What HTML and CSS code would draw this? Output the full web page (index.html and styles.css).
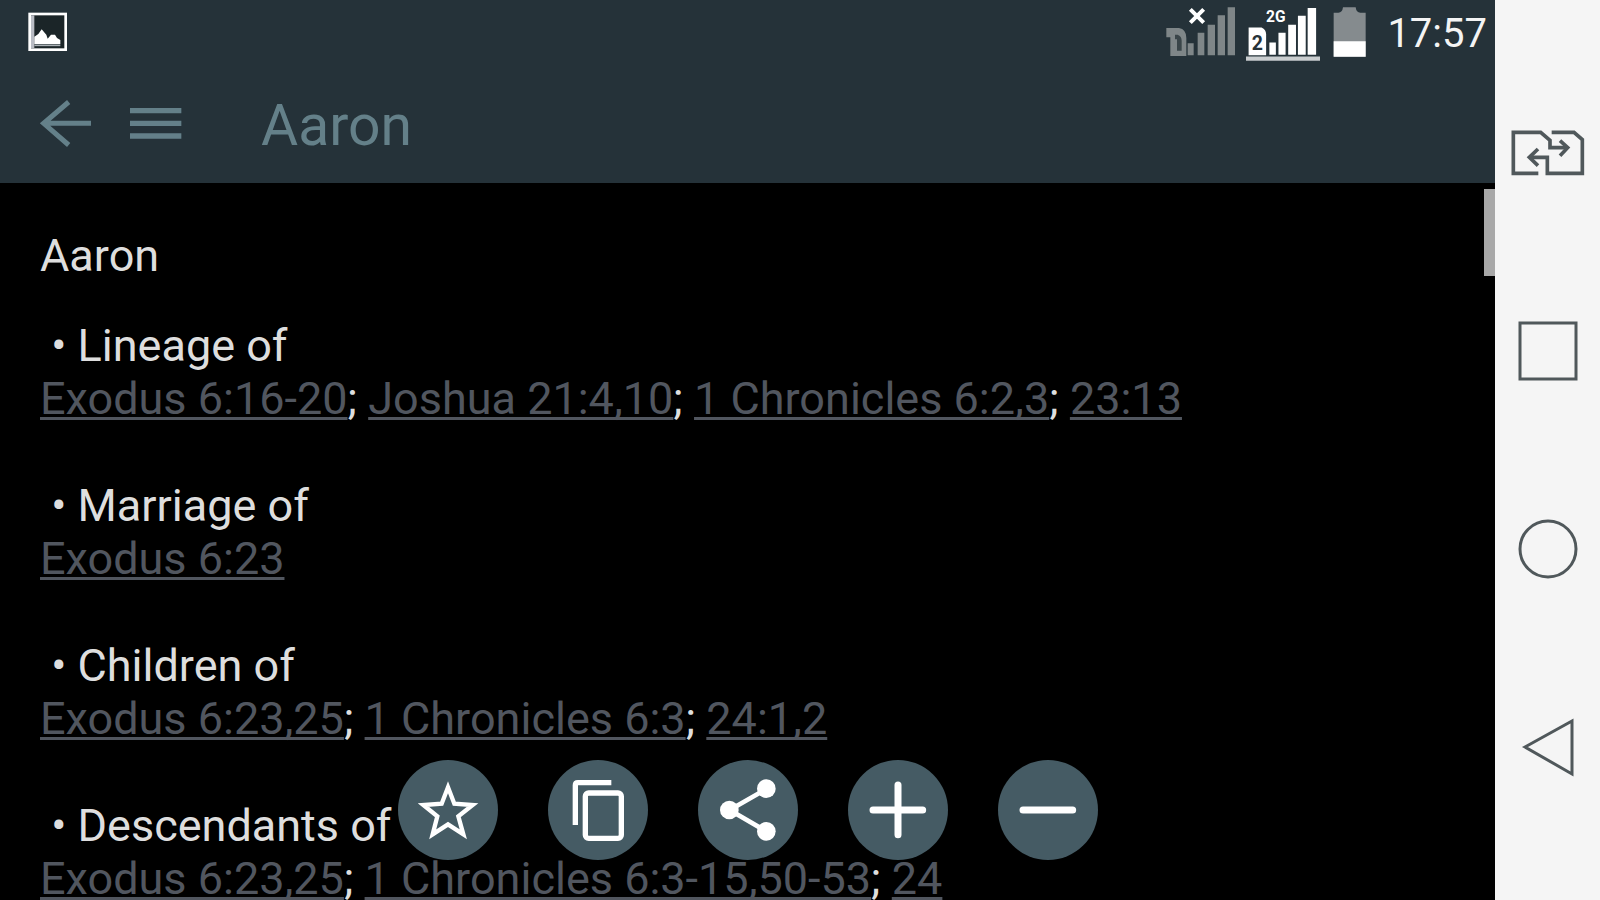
FILE: index.html
```html
<!DOCTYPE html>
<html lang="en">
<head>
<meta charset="utf-8">
<title>Aaron</title>
<link rel="stylesheet" href="styles.css">
</head>
<body>
<div class="device">
  <div class="app">
    <header class="header">
      <div class="status">
        <svg class="status-photo" viewBox="84 0 120 192" aria-hidden="true">
          <rect x="89" y="42" width="108" height="107" fill="#1b2528" stroke="#fff" stroke-width="8"/>
          <path d="M98 46v98" stroke="#b9bcc4" stroke-width="10"/>
          <path d="M103 132v-22l12-8 10-14 14 16 4 12 10-12h12l6 10 10 6v12z" fill="#fff"/>
          <path d="M103 136h78" stroke="#a9b0b4" stroke-width="5"/>
        </svg>
        <div class="status-right">
          <svg class="status-sim" viewBox="46 0 216 192" aria-hidden="true">
            <path d="M122 28l40 40M162 28l-40 40" stroke="#fff" stroke-width="12"/>
            <path d="M50 84h38q22 4 22 30v54H62v-56H50z" fill="#7f8688"/>
            <path d="M76 104h8q12 4 12 18v30H82v-34h-6z" fill="#3a4549"/>
            <path d="M114 130h18v36h-18zM144 98h20v68h-20zM174 74h22v92h-22zM204 46h22v120h-22zM234 22h22v144h-22z" fill="#7f8688"/>
          </svg>
          <svg class="status-sim" viewBox="284 0 228 192" aria-hidden="true">
            <text class="network" x="346" y="66">2G</text>
            <path d="M292 82h40q14 6 14 22v64h-54z" fill="#fff"/>
            <text class="sim-number" x="302" y="150">2</text>
            <path d="M356 128h20v38h-20zM384 98h22v68h-22zM414 74h24v92h-24zM444 46h24v120h-24zM474 22h26v144h-26z" fill="#fff"/>
            <path d="M284 178h228" stroke="#c9cdcf" stroke-width="13"/>
          </svg>
          <svg class="status-battery" viewBox="536 0 132 192" aria-hidden="true">
            <path d="M553 38h14q12 0 14-16h38q2 16 14 16h16v132h-96z" fill="#858b8e"/>
            <path d="M553 124h96v46h-96z" fill="#fff"/>
          </svg>
          <time class="clock">17:57</time>
        </div>
      </div>
      <div class="appbar">
        <button class="bar-button" aria-label="Back">
          <svg viewBox="114 284 168 168" aria-hidden="true"><path d="M273 369H130M206 305l-75 64 75 65" fill="none" stroke="#648089" stroke-width="15"/></svg>
        </button>
        <button class="bar-button" aria-label="Menu">
          <svg viewBox="384 284 168 168" aria-hidden="true"><path d="M390 331h154M390 369h154M390 407h154" stroke="#648089" stroke-width="16"/></svg>
        </button>
        <h1 class="title">Aaron</h1>
      </div>
    </header>
    <main class="content">
      <h2 class="heading">Aaron</h2>
      <section class="entry">
        <h3 class="topic"> • Lineage of</h3>
        <p class="refs"><a href="#">Exodus 6:16-20</a>; <a href="#">Joshua 21:4,10</a>; <a href="#">1 Chronicles 6:2,3</a>; <a href="#">23:13</a></p>
      </section>
      <section class="entry">
        <h3 class="topic"> • Marriage of</h3>
        <p class="refs"><a href="#">Exodus 6:23</a></p>
      </section>
      <section class="entry">
        <h3 class="topic"> • Children of</h3>
        <p class="refs"><a href="#">Exodus 6:23,25</a>; <a href="#">1 Chronicles 6:3</a>; <a href="#">24:1,2</a></p>
      </section>
      <section class="entry">
        <h3 class="topic"> • Descendants of</h3>
        <p class="refs"><a href="#">Exodus 6:23,25</a>; <a href="#">1 Chronicles 6:3-15,50-53</a>; <a href="#">24</a></p>
      </section>
      <div class="scroll-thumb"></div>
    </main>
    <div class="actions">
      <button class="action" aria-label="Favorite">
        <svg viewBox="52 60 300 300" aria-hidden="true"><path d="M202 142l19 49 55 4-43 34 15 54-46-30-46 30 14-54-42-34 55-4z" fill="none" stroke="#fff" stroke-width="13"/></svg>
      </button>
      <button class="action" aria-label="Copy">
        <svg viewBox="504 60 300 300" aria-hidden="true"><g fill="none" stroke="#fff" stroke-width="16"><path d="M586 255V136q0-8 8-8h100"/><rect x="616" y="159" width="108" height="136" rx="10"/></g></svg>
      </button>
      <button class="action" aria-label="Share">
        <svg viewBox="954 60 300 300" aria-hidden="true"><path d="M1159 147l-110 63 110 64" fill="none" stroke="#fff" stroke-width="14"/><g fill="#fff"><circle cx="1159" cy="146" r="28"/><circle cx="1048" cy="210" r="28"/><circle cx="1159" cy="274" r="28"/></g></svg>
      </button>
      <button class="action" aria-label="Increase text size">
        <svg viewBox="142 60 300 300" aria-hidden="true"><path d="M217 210h149M292 135v149" stroke="#fff" stroke-width="21" stroke-linecap="round"/></svg>
      </button>
      <button class="action" aria-label="Decrease text size">
        <svg viewBox="592 60 300 300" aria-hidden="true"><path d="M667 210h149" stroke="#fff" stroke-width="21" stroke-linecap="round"/></svg>
      </button>
    </div>
  </div>
  <nav class="system-nav" aria-label="System">
    <button class="nav-button" aria-label="Switch SIM">
      <svg viewBox="202 36 240 240" aria-hidden="true"><g fill="none" stroke="#50585b" stroke-width="11"><path d="M293 220h-75V97h82l28 24v22h50"/><path d="M358 122l23 21-23 24"/><path d="M333 97h67l25 22v101H320v-48h-50"/><path d="M292 147l-26 25 26 25"/></g></svg>
    </button>
    <button class="nav-button" aria-label="Recent apps">
      <svg viewBox="0 0 80 80" aria-hidden="true"><rect x="12" y="12" width="56" height="56" fill="none" stroke="#50585b" stroke-width="3"/></svg>
    </button>
    <button class="nav-button" aria-label="Home">
      <svg viewBox="0 0 80 80" aria-hidden="true"><circle cx="40" cy="40" r="28" fill="none" stroke="#50585b" stroke-width="3"/></svg>
    </button>
    <button class="nav-button" aria-label="Go back">
      <svg viewBox="0 0 80 80" aria-hidden="true"><path d="M17 39l47-26v53z" fill="none" stroke="#50585b" stroke-width="3"/></svg>
    </button>
  </nav>
</div>
</body>
</html>
```
FILE: styles.css
```css
* {
  box-sizing: border-box;
}

body {
  margin: 0;
  background: #000;
  color: #dedede;
  font-family: Roboto, "Liberation Sans", sans-serif;
}

button {
  padding: 0;
  border: 0;
  background: none;
  cursor: pointer;
}

svg {
  display: block;
}

.device {
  display: flex;
  height: 100vh;
  overflow: hidden;
}

.app {
  position: relative;
  display: flex;
  flex: 1;
  flex-direction: column;
  min-width: 0;
}

.header {
  flex: none;
  background: #253239;
}

.status {
  display: flex;
  justify-content: space-between;
  height: 64px;
  padding: 0 8px 0 28px;
}

.status-photo {
  width: 40px;
  height: 64px;
}

.status-right {
  display: flex;
  gap: 8px;
}

.status-sim {
  width: 74px;
  height: 64px;
}

.status-battery {
  width: 44px;
  height: 64px;
}

.network {
  fill: #fff;
  font-size: 48px;
  font-weight: 700;
}

.sim-number {
  fill: #263238;
  font-size: 60px;
  font-weight: 700;
}

.clock {
  padding-left: 7px;
  color: #f4f4f4;
  font-size: 40px;
  line-height: 68px;
}

.appbar {
  display: flex;
  align-items: center;
  gap: 34px;
  height: 119px;
  padding: 0 38px 2px;
}

.bar-button,
.bar-button svg {
  width: 56px;
  height: 56px;
}

.title {
  margin: 0;
  padding: 6px 0 0 43px;
  color: #648089;
  font-size: 57px;
  font-weight: 400;
  line-height: 64px;
}

.content {
  position: relative;
  flex: 1;
  min-height: 0;
  padding: 46px 40px 0;
  overflow: hidden;
  font-size: 45px;
  line-height: 53px;
}

.heading,
.topic,
.refs {
  margin: 0;
  font-size: inherit;
  font-weight: 400;
}

.heading {
  margin-bottom: 37px;
}

.topic {
  white-space: pre;
}

.entry {
  margin-bottom: 54px;
}

.refs a {
  color: #51565f;
  text-decoration: underline;
  text-decoration-thickness: 3px;
  text-decoration-skip-ink: none;
  text-underline-offset: 3px;
}

.scroll-thumb {
  position: absolute;
  top: 6px;
  right: 0;
  width: 11px;
  height: 87px;
  background: #a8a8a8;
}

.actions {
  position: absolute;
  right: 0;
  bottom: 40px;
  left: 0;
  display: flex;
  justify-content: center;
  gap: 50px;
}

.action {
  width: 100px;
  height: 100px;
  border-radius: 50%;
  background: #455b64;
}

.action svg {
  width: 100px;
  height: 100px;
}

.system-nav {
  display: flex;
  flex: none;
  flex-direction: column;
  align-items: center;
  justify-content: space-between;
  width: 105px;
  padding: 112px 0;
  background: #f5f5f5;
}

.nav-button,
.nav-button svg {
  width: 80px;
  height: 80px;
}
```
